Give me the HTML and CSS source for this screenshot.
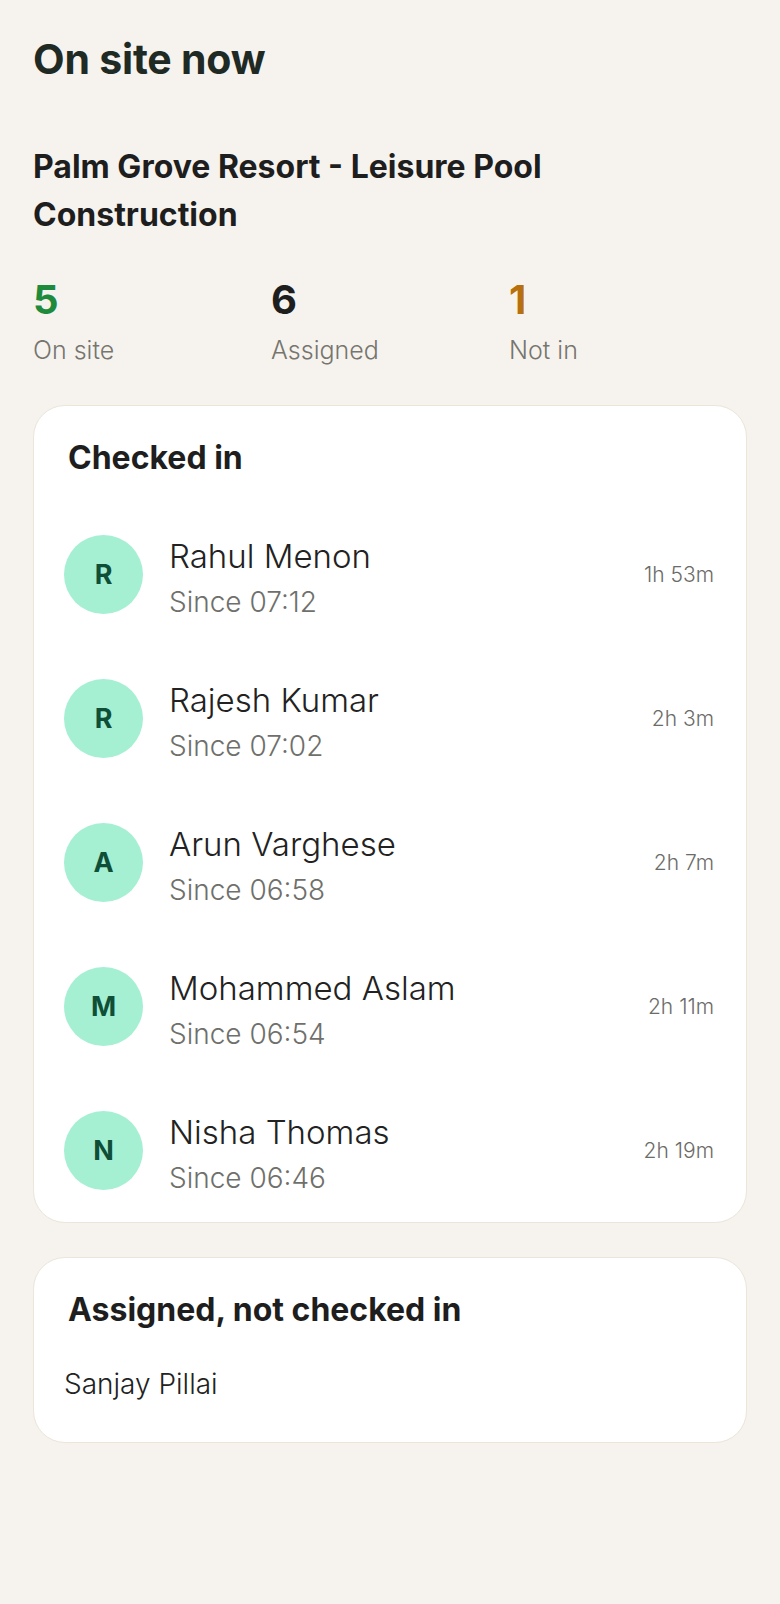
FILE: index.html
```html
<!DOCTYPE html>
<html lang="en">

<head>
    <meta charset="UTF-8">
    <meta name="viewport" content="width=device-width, initial-scale=1.0">
    <title>On site now</title>
    <link rel="stylesheet" href="styles.css">
</head>

<body>

    <div class="page">
        <h1 class="page-title">On site now</h1>

        <h2 class="project-name">Palm Grove Resort - Leisure Pool Construction</h2>

        <div class="stats">
            <div class="stat">
                <span class="stat-value on-site">5</span>
                <span class="stat-label">On site</span>
            </div>
            <div class="stat">
                <span class="stat-value">6</span>
                <span class="stat-label">Assigned</span>
            </div>
            <div class="stat">
                <span class="stat-value not-in">1</span>
                <span class="stat-label">Not in</span>
            </div>
        </div>

        <div class="card">
            <h3 class="card-title">Checked in</h3>
            <ul class="worker-list">
                <li class="worker">
                    <div class="avatar">R</div>
                    <div class="worker-info">
                        <div class="worker-name">Rahul Menon</div>
                        <div class="worker-since">Since 07:12</div>
                    </div>
                    <div class="worker-duration">1h 53m</div>
                </li>
                <li class="worker">
                    <div class="avatar">R</div>
                    <div class="worker-info">
                        <div class="worker-name">Rajesh Kumar</div>
                        <div class="worker-since">Since 07:02</div>
                    </div>
                    <div class="worker-duration">2h 3m</div>
                </li>
                <li class="worker">
                    <div class="avatar">A</div>
                    <div class="worker-info">
                        <div class="worker-name">Arun Varghese</div>
                        <div class="worker-since">Since 06:58</div>
                    </div>
                    <div class="worker-duration">2h 7m</div>
                </li>
                <li class="worker">
                    <div class="avatar">M</div>
                    <div class="worker-info">
                        <div class="worker-name">Mohammed Aslam</div>
                        <div class="worker-since">Since 06:54</div>
                    </div>
                    <div class="worker-duration">2h 11m</div>
                </li>
                <li class="worker">
                    <div class="avatar">N</div>
                    <div class="worker-info">
                        <div class="worker-name">Nisha Thomas</div>
                        <div class="worker-since">Since 06:46</div>
                    </div>
                    <div class="worker-duration">2h 19m</div>
                </li>
            </ul>
        </div>

        <div class="card card-missing">
            <h3 class="card-title">Assigned, not checked in</h3>
            <p class="missing-name">Sanjay Pillai</p>
        </div>
    </div>

</body>

</html>
```

FILE: styles.css
```css
body {
    margin: 0;
    background-color: #f6f3ee;
    font-family: Inter, 'Noto Sans', sans-serif;
    color: #222222;
}

.page {
    padding: 35px 33px 40px;
}

.page-title {
    margin: 0;
    font-size: 41px;
    line-height: 48px;
    font-weight: 700;
    color: #1f2a24;
    letter-spacing: -0.2px;
}

.project-name {
    margin: 60px 0 0;
    font-size: 32px;
    line-height: 48px;
    font-weight: 700;
    color: #1e1e1e;
    max-width: 580px;
}

.stats {
    display: grid;
    grid-template-columns: repeat(3, 1fr);
    margin-top: 37px;
}

.stat {
    display: flex;
    flex-direction: column;
}

.stat-value {
    font-size: 40px;
    line-height: 48px;
    font-weight: 700;
    color: #1e1e1e;
}

.stat-value.on-site {
    color: #1e8a3c;
}

.stat-value.not-in {
    color: #b8700c;
}

.stat-label {
    margin-top: 10px;
    font-size: 25px;
    line-height: 32px;
    font-weight: 300;
    color: #76756f;
}

.card {
    margin-top: 39px;
    background-color: #ffffff;
    border: 1px solid #ebe5da;
    border-radius: 32px;
    padding: 32px 30px 0;
}

.card-title {
    margin: 0;
    padding-left: 4px;
    font-size: 32px;
    line-height: 40px;
    font-weight: 700;
    color: #1e1e1e;
}

.worker-list {
    list-style: none;
    margin: 24px 0 0;
    padding: 0;
}

.worker {
    display: flex;
    align-items: center;
    height: 144px;
}

.avatar {
    flex: none;
    width: 79px;
    height: 79px;
    border-radius: 50%;
    background-color: #a5efd3;
    color: #0f4f37;
    font-size: 27px;
    font-weight: 700;
    display: flex;
    align-items: center;
    justify-content: center;
}

.worker-info {
    flex: 1;
    margin-left: 26px;
    padding-top: 12px;
}

.worker-name {
    font-size: 33px;
    line-height: 40px;
    font-weight: 300;
    color: #222222;
}

.worker-since {
    margin-top: 4px;
    font-size: 28px;
    line-height: 44px;
    font-weight: 300;
    color: #6f6f6b;
}

.worker-duration {
    font-size: 21px;
    line-height: 1;
    font-weight: 300;
    color: #6b6b68;
    margin-right: 2px;
}

.card-missing {
    margin-top: 34px;
    padding-bottom: 40px;
}

.missing-name {
    margin: 36px 0 0;
    font-size: 28px;
    line-height: 36px;
    font-weight: 300;
    color: #222222;
}
```
